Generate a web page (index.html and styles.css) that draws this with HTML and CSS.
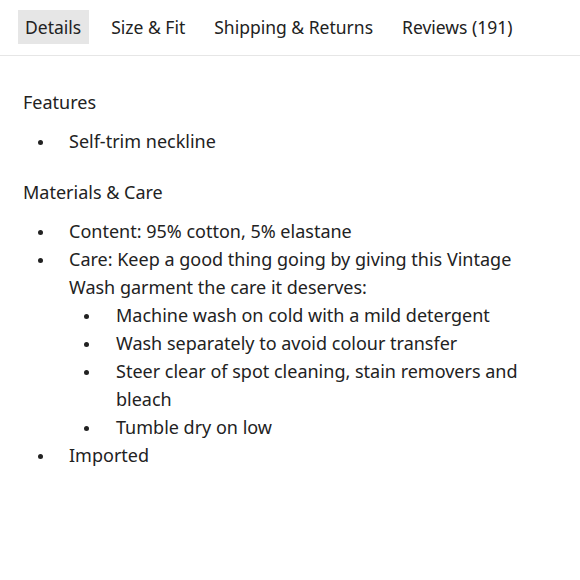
FILE: index.html
```html
<!DOCTYPE html>
<html lang="en">
<head>
<meta charset="utf-8">
<link rel="stylesheet" href="styles.css">
</head>
<body>
<nav class="tabs">
  <span class="tab active">Details</span>
  <span class="tab">Size &amp; Fit</span>
  <span class="tab">Shipping &amp; Returns</span>
  <span class="tab">Reviews (191)</span>
</nav>
<section class="content">
  <h3 class="heading">Features</h3>
  <ul class="list">
    <li>Self-trim neckline</li>
  </ul>
  <h3 class="heading">Materials &amp; Care</h3>
  <ul class="list">
    <li>Content: 95% cotton, 5% elastane</li>
    <li>Care: Keep a good thing going by giving this Vintage Wash garment the care it deserves:
      <ul class="list">
        <li>Machine wash on cold with a mild detergent</li>
        <li>Wash separately to avoid colour transfer</li>
        <li>Steer clear of spot cleaning, stain removers and bleach</li>
        <li>Tumble dry on low</li>
      </ul>
    </li>
    <li>Imported</li>
  </ul>
</section>
</body>
</html>
```
FILE: styles.css
```css
* { box-sizing: border-box; }
body {
  margin: 0;
  background: #fff;
  color: #222;
  font-family: "Noto Sans", "DejaVu Sans", sans-serif;
  font-size: 18px;
}
.tabs {
  display: flex;
  gap: 15px;
  padding: 10px 18px 0;
  height: 56px;
  border-bottom: 1px solid #e6e6e6;
  align-items: flex-start;
}
.tab {
  height: 34px;
  line-height: 34px;
  padding: 0 7px;
  font-size: 17.5px;
  color: #222;
}
.tab.active { background: #e6e6e6; padding-right: 8px; }
.content {
  padding: 32px 23px 0;
}
.heading {
  margin: 0;
  font-weight: 400;
  font-size: 18px;
  line-height: 28px;
}
.list {
  list-style: none;
  margin: 11px 0 23px;
  padding: 0;
}
.list .list { margin: 0; padding-left: 0; }
.list li {
  position: relative;
  padding-left: 46px;
  line-height: 28px;
}
.list .list li { padding-left: 47px; }
.list li::before {
  content: "";
  position: absolute;
  left: 15px;
  top: 13px;
  width: 5px;
  height: 5px;
  border-radius: 50%;
  background: #222;
}
```
